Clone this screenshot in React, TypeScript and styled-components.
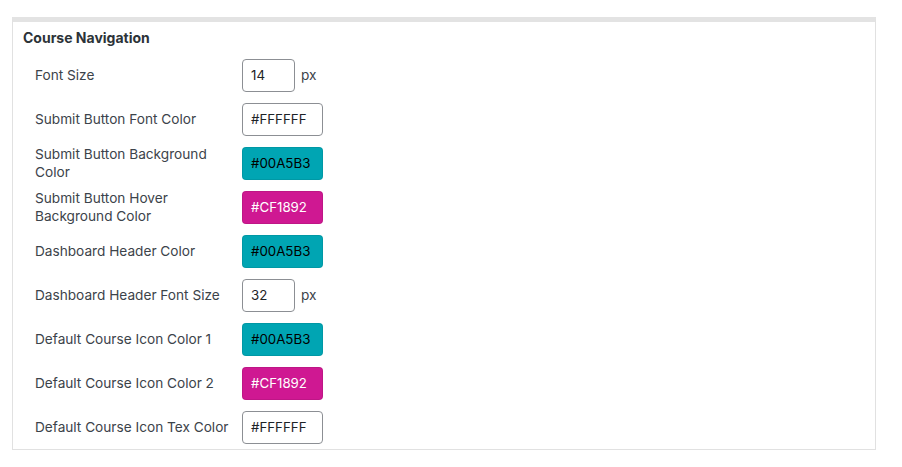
import React from 'react';
import styled, { createGlobalStyle } from 'styled-components';

const GlobalStyle = createGlobalStyle`
  body {
    margin: 0;
    background: #ffffff;
    font-family: Inter, "Noto Sans", "Liberation Sans", sans-serif;
    -webkit-font-smoothing: antialiased;
  }
`;

const Page = styled.div`
  padding: 17px 26px 16px 12px;
`;

const Panel = styled.section`
  width: 864px;
  box-sizing: border-box;
  background: #fff;
  border: 1px solid #e1e1e1;
  border-top: 5px solid #e3e3e3;
`;

const Heading = styled.h2`
  margin: 0;
  padding-left: 10px;
  height: 31px;
  line-height: 31px;
  font-size: 14px;
  font-weight: 700;
  color: #2c3338;
`;

const Row = styled.div`
  display: grid;
  grid-template-columns: 207px auto;
  align-items: center;
  height: 44px;
  padding-left: 22px;
`;

const Label = styled.label`
  padding-right: 8px;
  font-size: 13.65px;
  line-height: 18px;
  color: #3c434a;
`;

const Field = styled.div`
  display: flex;
  align-items: center;
  gap: 6px;
`;

const Input = styled.div<{ $width: number; $bg?: string; $fg?: string }>`
  box-sizing: border-box;
  width: ${(p) => p.$width}px;
  height: 33px;
  padding: 0 8px;
  display: flex;
  align-items: center;
  border: 1px solid ${(p) => (p.$bg ? 'rgba(0,0,0,0.08)' : '#8c8f94')};
  border-radius: 4px;
  background: ${(p) => p.$bg || '#fff'};
  color: ${(p) => p.$fg || '#1d2327'};
  font-size: 13.3px;
`;

const Unit = styled.span`
  font-size: 13.65px;
  color: #3c434a;
`;

type Setting = {
  label: string;
  value: string;
  kind: 'number' | 'color';
  bg?: string;
  fg?: string;
};

const settings: Setting[] = [
  { label: 'Font Size', value: '14', kind: 'number' },
  { label: 'Submit Button Font Color', value: '#FFFFFF', kind: 'color' },
  { label: 'Submit Button Background Color', value: '#00A5B3', kind: 'color', bg: '#00a5b3', fg: '#000' },
  { label: 'Submit Button Hover Background Color', value: '#CF1892', kind: 'color', bg: '#cf1892', fg: '#fff' },
  { label: 'Dashboard Header Color', value: '#00A5B3', kind: 'color', bg: '#00a5b3', fg: '#000' },
  { label: 'Dashboard Header Font Size', value: '32', kind: 'number' },
  { label: 'Default Course Icon Color 1', value: '#00A5B3', kind: 'color', bg: '#00a5b3', fg: '#000' },
  { label: 'Default Course Icon Color 2', value: '#CF1892', kind: 'color', bg: '#cf1892', fg: '#fff' },
  { label: 'Default Course Icon Tex Color', value: '#FFFFFF', kind: 'color' },
];

export default function App(): JSX.Element {
  return (
    <Page>
      <GlobalStyle />
      <Panel>
        <Heading>Course Navigation</Heading>
        {settings.map((s) => (
          <Row key={s.label}>
            <Label>{s.label}</Label>
            <Field>
              <Input $width={s.kind === 'number' ? 53 : 81} $bg={s.bg} $fg={s.fg}>
                {s.value}
              </Input>
              {s.kind === 'number' && <Unit>px</Unit>}
            </Field>
          </Row>
        ))}
      </Panel>
    </Page>
  );
}
